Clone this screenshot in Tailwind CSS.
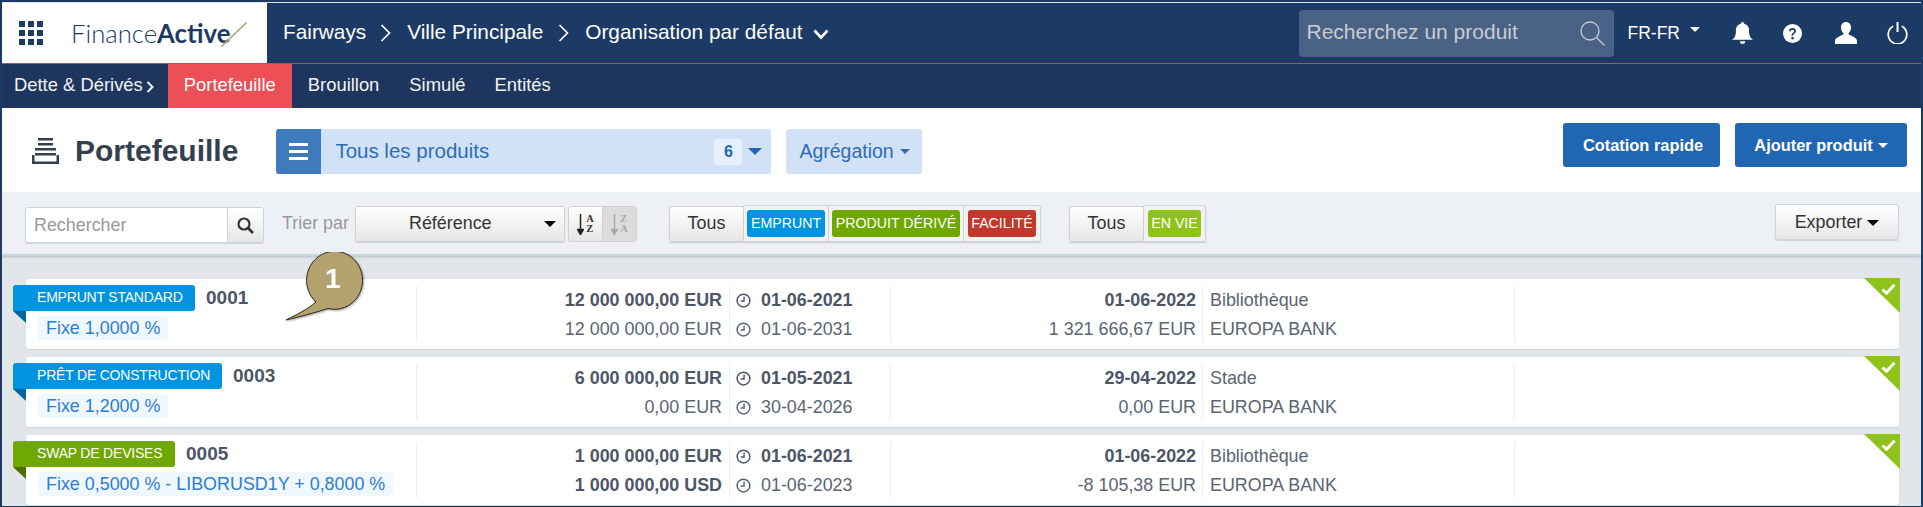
<!DOCTYPE html>
<html lang="fr">
<head>
  <meta charset="UTF-8">
  <title>Portefeuille</title>
  <script src="https://cdn.jsdelivr.net/npm/@tailwindcss/browser@4"></script>
</head>
<body class="bg-[#1c3a66]">
  <svg class="hidden">
    <symbol id="clock" viewBox="0 0 16 16"><circle cx="8" cy="8" r="6.8" fill="none" stroke="currentColor" stroke-width="1.6"/><path d="M8.600 3.800v4.800H5" fill="none" stroke="currentColor" stroke-width="1.500"/></symbol>
    <symbol id="check" viewBox="0 0 15 12"><path d="M1.500 6.500 5.500 10.300 13.500 1.800" fill="none" stroke="#fff" stroke-width="3"/></symbol>
  </svg>

  <div class="w-[1923px] h-[507px] overflow-hidden p-[2px] relative font-['Liberation_Sans',Arial,sans-serif]">
    <div class="h-px bg-[#dfe3e8]"></div>

    <!-- Top nav -->
    <div class="h-[60px] bg-[#1c3a66] flex items-center text-white">
      <div class="w-[265px] h-full bg-white flex items-center shrink-0">
        <div class="ml-[17px] grid grid-cols-3 gap-[3px] w-[24px]">
          <span class="w-[6px] h-[6px] bg-[#1c3a66]"></span><span class="w-[6px] h-[6px] bg-[#1c3a66]"></span><span class="w-[6px] h-[6px] bg-[#1c3a66]"></span>
          <span class="w-[6px] h-[6px] bg-[#1c3a66]"></span><span class="w-[6px] h-[6px] bg-[#1c3a66]"></span><span class="w-[6px] h-[6px] bg-[#1c3a66]"></span>
          <span class="w-[6px] h-[6px] bg-[#1c3a66]"></span><span class="w-[6px] h-[6px] bg-[#1c3a66]"></span><span class="w-[6px] h-[6px] bg-[#1c3a66]"></span>
        </div>
        <div class="ml-[28px] text-[25.7px] text-[#1c3a66] font-['Lato',sans-serif] font-light whitespace-nowrap">Finance<span class="font-bold">Active</span></div>
        <svg class="-ml-[9px] mt-[3px]" width="26" height="25" viewBox="0 0 26 25"><path d="M0.500 24.500 25.500 0.500" stroke="#b8a77a" stroke-width="1.600"/></svg>
      </div>
      <span class="ml-[16px] mb-[2px] text-[20.8px] whitespace-nowrap">Fairways</span>
      <svg class="ml-[14px]" width="11" height="18" viewBox="0 0 11 18"><path d="M1.500 1 9.500 9 1.500 17" fill="none" stroke="#fff" stroke-width="1.700"/></svg>
      <span class="ml-[16px] mb-[2px] text-[20.8px] whitespace-nowrap">Ville Principale</span>
      <svg class="ml-[15px]" width="11" height="18" viewBox="0 0 11 18"><path d="M1.500 1 9.500 9 1.500 17" fill="none" stroke="#fff" stroke-width="1.700"/></svg>
      <span class="ml-[16px] mb-[2px] text-[20.8px] whitespace-nowrap">Organisation par défaut</span>
      <svg class="ml-[10px] mt-[3px]" width="16" height="11" viewBox="0 0 16 11"><path d="M1.500 1.500 8 8.500 14.500 1.500" fill="none" stroke="#fff" stroke-width="2.600"/></svg>

      <div class="ml-auto w-[315px] h-[47px] bg-[#4a6285] rounded-[4px] flex items-center pl-[8px] pr-[9px]">
        <span class="mb-[2px] text-[21px] text-[#c9ccd0] whitespace-nowrap">Recherchez un produit</span>
        <svg class="ml-auto" width="25" height="25" viewBox="0 0 25 25"><circle cx="10" cy="10" r="9" fill="none" stroke="#c9ccd0" stroke-width="1.300"/><path d="M16.500 16.500 24.500 24.500" stroke="#c9ccd0" stroke-width="1.300"/></svg>
      </div>
      <span class="ml-[14px] text-[17.5px] whitespace-nowrap">FR-FR</span>
      <span class="ml-[10px] mb-[8px] w-0 h-0 border-x-[5px] border-x-transparent border-t-[5px] border-t-white"></span>
      <svg class="ml-[32px]" width="21" height="23" viewBox="0 0 20 22"><path d="M10 0a1.600 1.600 0 0 1 1.600 1.700C15 2.500 16.300 5 16.300 8.500c0 4.500 1.200 6.500 3.700 8.500H0c2.500-2 3.700-4 3.700-8.500C3.700 5 5 2.500 8.400 1.700A1.600 1.600 0 0 1 10 0ZM7.500 18.500h5a2.500 2.500 0 0 1-5 0Z" fill="#fff"/></svg>
      <svg class="ml-[30px]" width="19" height="19" viewBox="0 0 19 19"><circle cx="9.500" cy="9.500" r="9.500" fill="#fff"/><path d="M6 7.300C6 5.300 7.500 4.100 9.500 4.100s3.500 1.200 3.500 3c0 2.600-3 2.600-3 4.700H8.500c0-3 2.700-3.100 2.700-4.600 0-1-.8-1.500-1.700-1.500-1 0-1.700.6-1.800 1.600Z" fill="#1c3a66"/><rect x="8.400" y="13" width="2.300" height="2.300" fill="#1c3a66"/></svg>
      <svg class="ml-[33px]" width="22" height="22" viewBox="0 0 22 22"><path d="M11 0c3 0 5 2.300 5 5.500 0 2.200-.8 4.200-2.200 5.400-.4.400-.4 1.500.3 1.900 3 1.500 7.900 2.800 7.900 6.200V22H0v-3c0-3.400 4.900-4.700 7.900-6.200.7-.4.700-1.500.3-1.900C6.800 9.700 6 7.700 6 5.500 6 2.300 8 0 11 0Z" fill="#fff"/></svg>
      <svg class="ml-[30px] mr-[13px]" width="21" height="22" viewBox="0 0 21 22"><path d="M6.200 4.300a9.300 9.300 0 1 0 8.600 0" fill="none" stroke="#fff" stroke-width="1.700"/><path d="M10.500 0v10" stroke="#fff" stroke-width="2"/></svg>
    </div>
    <div class="h-px bg-[#b5525a]"></div>

    <!-- Sub nav -->
    <div class="h-[44px] bg-[#1e365e] flex items-center text-[#f2f4f7] text-[18.4px]">
      <span class="ml-[12px] mb-[2px] whitespace-nowrap">Dette &amp; Dérivés</span>
      <svg class="ml-[3px] mt-[1px]" width="8" height="12" viewBox="0 0 8 12"><path d="M1.500 1 6.500 6 1.500 11" fill="none" stroke="#f2f4f7" stroke-width="2"/></svg>
      <div class="ml-[14px] w-[124px] h-full pb-[2px] bg-[#ec4f55] text-white flex items-center justify-center whitespace-nowrap">Portefeuille</div>
      <span class="ml-[16px] mb-[2px] whitespace-nowrap">Brouillon</span>
      <span class="ml-[30px] mb-[2px] whitespace-nowrap">Simulé</span>
      <span class="ml-[29px] mb-[2px] whitespace-nowrap">Entités</span>
    </div>

    <!-- Title bar -->
    <div class="h-[84px] bg-white flex items-start">
      <svg class="ml-[30px] mt-[30px]" width="27" height="26" viewBox="0 0 27 26" fill="#343f50"><rect x="6" y="0" width="15" height="2.500"/><rect x="6" y="5" width="15" height="2.500"/><rect x="3" y="10" width="21" height="2.500"/><rect x="3" y="15" width="21" height="2.500"/><path d="M0 17h2.500v6.500h22V17H27v9H0Z"/></svg>
      <span class="ml-[16px] mt-[22px] text-[30px] leading-[42px] font-bold text-[#343f50] whitespace-nowrap">Portefeuille</span>
      <div class="ml-[38px] mt-[21px] w-[495px] h-[45px] bg-[#d1e2f7] rounded-[3px] flex items-center overflow-hidden">
        <div class="w-[45px] h-full bg-[#3f7abd] flex flex-col items-center justify-center gap-[4px]">
          <span class="w-[19px] h-[3px] bg-white"></span><span class="w-[19px] h-[3px] bg-white"></span><span class="w-[19px] h-[3px] bg-white"></span>
        </div>
        <span class="ml-[14px] text-[20.5px] text-[#2e6cb5] whitespace-nowrap">Tous les produits</span>
        <span class="ml-auto w-[28px] h-[26px] bg-[#e6f0fc] rounded-[3px] text-[#2166b3] text-[16px] font-bold flex items-center justify-center">6</span>
        <span class="ml-[6px] mr-[9px] w-0 h-0 border-x-[7px] border-x-transparent border-t-[7px] border-t-[#2166b3]"></span>
      </div>
      <div class="ml-[15px] mt-[21px] w-[136px] h-[45px] bg-[#d1e2f7] rounded-[3px] flex items-center pl-[13px]">
        <span class="text-[19.5px] text-[#2e6cb5] whitespace-nowrap">Agrégation</span>
        <span class="ml-[6px] w-0 h-0 border-x-[5px] border-x-transparent border-t-[5px] border-t-[#2e6cb5]"></span>
      </div>
      <div class="ml-auto mt-[15px] w-[157px] h-[44px] bg-[#2166b3] rounded-[3px] flex items-center justify-center pl-[3px] text-white text-[16.4px] font-bold whitespace-nowrap">Cotation rapide</div>
      <div class="ml-[15px] mr-[14px] mt-[15px] w-[172px] h-[44px] bg-[#2166b3] rounded-[3px] flex items-center justify-center gap-[5px] text-white text-[16.4px] font-bold whitespace-nowrap">Ajouter produit<span class="w-0 h-0 border-x-[5px] border-x-transparent border-t-[5px] border-t-white"></span></div>
    </div>

    <!-- Toolbar -->
    <div class="h-[64px] bg-[#edf0f5] flex items-start border-b-2 border-[#c8d5df] relative z-10 shadow-[0_1px_2px_rgba(90,110,130,0.35)] text-[17.9px]">
      <div class="ml-[23px] mt-[15px] flex h-[36px] w-[239px] border border-[#d0d3d6] rounded-[3px] bg-white overflow-hidden shadow-[0_1px_1px_rgba(0,0,0,0.12)]">
        <span class="w-[201px] pl-[8px] leading-[34px] text-[#999]">Rechercher</span>
        <div class="flex-1 border-l border-[#d0d3d6] bg-gradient-to-b from-white to-[#e6e6e6] flex items-center justify-center">
          <svg width="17" height="17" viewBox="0 0 17 17"><circle cx="7" cy="7" r="5.500" fill="none" stroke="#333" stroke-width="2.200"/><path d="M11 11 16 16" stroke="#333" stroke-width="2.600"/></svg>
        </div>
      </div>
      <span class="ml-[18px] mt-[13px] leading-[36px] text-[#999] whitespace-nowrap w-[67px]">Trier par</span>
      <div class="ml-[6px] mt-[14px] w-[210px] h-[36px] pb-[2px] border border-[#cfd2d5] rounded-[3px] bg-gradient-to-b from-white to-[#e6e6e6] flex items-center shadow-[0_1px_1px_rgba(0,0,0,0.12)]">
        <span class="ml-[53px] text-[#333]">Référence</span>
        <span class="ml-auto mr-[8px] mt-[2px] w-0 h-0 border-x-[6px] border-x-transparent border-t-[6px] border-t-black"></span>
      </div>
      <div class="ml-[3px] mt-[14px] w-[35px] h-[36px] border border-[#cfd2d5] rounded-l-[3px] bg-gradient-to-b from-white to-[#e6e6e6] flex items-center justify-center gap-[2px]">
        <svg width="7" height="21" viewBox="0 0 7 21"><path d="M3.500 0v19M0.500 15.500 3.500 20.500 6.500 15.500Z" fill="#222" stroke="#222" stroke-width="1.500"/></svg>
        <div class="flex flex-col text-[10.5px] leading-[10.5px] font-bold font-['Liberation_Serif',serif] text-[#333]"><span>A</span><span>Z</span></div>
      </div>
      <div class="w-[34px] mt-[14px] h-[36px] border border-l-0 border-[#cfd2d5] rounded-r-[3px] bg-[#dcdcdc] flex items-center justify-center gap-[2px]">
        <svg width="7" height="21" viewBox="0 0 7 21"><path d="M3.500 0v19M0.500 15.500 3.500 20.500 6.500 15.500Z" fill="#a8a8a8" stroke="#a8a8a8" stroke-width="1.500"/></svg>
        <div class="flex flex-col text-[10.5px] leading-[10.5px] font-bold font-['Liberation_Serif',serif] text-[#a8a8a8]"><span>Z</span><span>A</span></div>
      </div>

      <div class="ml-[32px] mt-[13px] flex h-[37px] shadow-[0_1px_1px_rgba(0,0,0,0.12)]">
        <div class="w-[75px] mt-px pb-[2px] border border-[#cfd2d5] rounded-l-[3px] bg-gradient-to-b from-white to-[#e6e6e6] flex items-center justify-center text-[#333]">Tous</div>
        <div class="w-[85px] border border-l-0 border-[#cfd2d5] bg-[#f2f2f2] flex items-center justify-center"><span class="w-[78px] h-[27px] rounded-[3px] bg-[#0093e0] text-white text-[14.2px] flex items-center justify-center">EMPRUNT</span></div>
        <div class="w-[135px] border border-l-0 border-[#cfd2d5] bg-[#f2f2f2] flex items-center justify-center"><span class="w-[128px] h-[27px] rounded-[3px] bg-[#6fa800] text-white text-[14.2px] flex items-center justify-center whitespace-nowrap">PRODUIT DÉRIVÉ</span></div>
        <div class="w-[77px] border border-l-0 border-[#cfd2d5] rounded-r-[3px] bg-[#f2f2f2] flex items-center justify-center"><span class="w-[68px] h-[27px] rounded-[3px] bg-[#c0392b] text-white text-[14.2px] flex items-center justify-center">FACILITÉ</span></div>
      </div>

      <div class="ml-[28px] mt-[13px] flex h-[37px] shadow-[0_1px_1px_rgba(0,0,0,0.12)]">
        <div class="w-[75px] mt-px pb-[2px] border border-[#cfd2d5] rounded-l-[3px] bg-gradient-to-b from-white to-[#e6e6e6] flex items-center justify-center text-[#333]">Tous</div>
        <div class="w-[62px] border border-l-0 border-[#cfd2d5] rounded-r-[3px] bg-[#f2f2f2] flex items-center justify-center"><span class="w-[53px] h-[27px] rounded-[3px] bg-[#8fc31a] text-white text-[14.2px] flex items-center justify-center whitespace-nowrap">EN VIE</span></div>
      </div>

      <div class="ml-auto mr-[22px] mt-[12px] w-[124px] h-[36px] border border-[#cfd2d5] rounded-[3px] bg-gradient-to-b from-white to-[#e6e6e6] flex items-center justify-center gap-[5px] text-[#333] shadow-[0_1px_1px_rgba(0,0,0,0.12)]">Exporter<span class="mt-[2px] w-0 h-0 border-x-[6px] border-x-transparent border-t-[6px] border-t-black"></span></div>
    </div>

    <!-- List -->
    <div class="h-[250px] bg-[#e2e6ea] pt-[23px] pl-[24px] pr-[22px] flex flex-col gap-[8px] overflow-hidden relative">

      <div class="relative shrink-0 h-[70px] bg-white rounded-[3px] shadow-[0_1px_1px_rgba(0,0,0,0.08)] py-[7px] flex text-[17.9px] text-[#5a6472]">
        <div class="w-[391px] border-r border-[#eceef0] relative">
          <div class="-ml-[13px] -mt-px h-[26px] flex items-center">
            <span class="w-[182px] h-[26px] pl-[24px] bg-[#0093e0] rounded-r-[3px] rounded-tl-[3px] text-white text-[14px] tracking-[-0.2px] leading-[25px] whitespace-nowrap">EMPRUNT STANDARD</span>
            <span class="ml-[11px] text-[19px] leading-[26px] font-bold text-[#4d5666]">0001</span>
          </div>
          <span class="absolute -left-[13px] top-[25px] w-0 h-0 border-l-[13px] border-l-transparent border-t-[12px] border-t-[#0065a3]"></span>
          <span class="block w-fit ml-[12px] mt-[5px] h-[24px] px-[8px] rounded-[4px] bg-[#eff7ff] text-[#2d7dd2] leading-[24px] whitespace-nowrap">Fixe 1,0000 %</span>
        </div>
        <div class="w-[313px] border-r border-[#eceef0] pr-[7px] text-right leading-[29px] whitespace-nowrap"><div class="font-bold text-[#4d5666]">12 000 000,00 EUR</div><div>12 000 000,00 EUR</div></div>
        <div class="w-[161px] border-r border-[#eceef0] pl-[6px] leading-[29px] whitespace-nowrap">
          <div class="flex items-center gap-[10px] font-bold text-[#4d5666]"><svg class="w-[15px] h-[15px]"><use href="#clock"/></svg>01-06-2021</div>
          <div class="flex items-center gap-[10px]"><svg class="w-[15px] h-[15px]"><use href="#clock"/></svg>01-06-2031</div>
        </div>
        <div class="w-[312px] border-r border-[#eceef0] pr-[6px] text-right leading-[29px] whitespace-nowrap"><div class="font-bold text-[#4d5666]">01-06-2022</div><div>1 321 666,67 EUR</div></div>
        <div class="w-[312px] border-r border-[#eceef0] pl-[7px] leading-[29px] whitespace-nowrap"><div>Bibliothèque</div><div>EUROPA BANK</div></div>
        <svg class="absolute -top-px -right-px" width="36" height="35" viewBox="0 0 36 35"><polygon points="0,0 36,0 36,35" fill="#8fc31a"/></svg>
        <svg class="absolute top-[4px] right-[3px] w-[15px] h-[12px]"><use href="#check"/></svg>
      </div>

      <div class="relative shrink-0 h-[70px] bg-white rounded-[3px] shadow-[0_1px_1px_rgba(0,0,0,0.08)] py-[7px] flex text-[17.9px] text-[#5a6472]">
        <div class="w-[391px] border-r border-[#eceef0] relative">
          <div class="-ml-[13px] -mt-px h-[26px] flex items-center">
            <span class="w-[209px] h-[26px] pl-[24px] bg-[#0093e0] rounded-r-[3px] rounded-tl-[3px] text-white text-[14px] tracking-[-0.2px] leading-[25px] whitespace-nowrap">PRÊT DE CONSTRUCTION</span>
            <span class="ml-[11px] text-[19px] leading-[26px] font-bold text-[#4d5666]">0003</span>
          </div>
          <span class="absolute -left-[13px] top-[25px] w-0 h-0 border-l-[13px] border-l-transparent border-t-[12px] border-t-[#0065a3]"></span>
          <span class="block w-fit ml-[12px] mt-[5px] h-[24px] px-[8px] rounded-[4px] bg-[#eff7ff] text-[#2d7dd2] leading-[24px] whitespace-nowrap">Fixe 1,2000 %</span>
        </div>
        <div class="w-[313px] border-r border-[#eceef0] pr-[7px] text-right leading-[29px] whitespace-nowrap"><div class="font-bold text-[#4d5666]">6 000 000,00 EUR</div><div>0,00 EUR</div></div>
        <div class="w-[161px] border-r border-[#eceef0] pl-[6px] leading-[29px] whitespace-nowrap">
          <div class="flex items-center gap-[10px] font-bold text-[#4d5666]"><svg class="w-[15px] h-[15px]"><use href="#clock"/></svg>01-05-2021</div>
          <div class="flex items-center gap-[10px]"><svg class="w-[15px] h-[15px]"><use href="#clock"/></svg>30-04-2026</div>
        </div>
        <div class="w-[312px] border-r border-[#eceef0] pr-[6px] text-right leading-[29px] whitespace-nowrap"><div class="font-bold text-[#4d5666]">29-04-2022</div><div>0,00 EUR</div></div>
        <div class="w-[312px] border-r border-[#eceef0] pl-[7px] leading-[29px] whitespace-nowrap"><div>Stade</div><div>EUROPA BANK</div></div>
        <svg class="absolute -top-px -right-px" width="36" height="35" viewBox="0 0 36 35"><polygon points="0,0 36,0 36,35" fill="#8fc31a"/></svg>
        <svg class="absolute top-[4px] right-[3px] w-[15px] h-[12px]"><use href="#check"/></svg>
      </div>

      <div class="relative shrink-0 h-[70px] bg-white rounded-[3px] shadow-[0_1px_1px_rgba(0,0,0,0.08)] py-[7px] flex text-[17.9px] text-[#5a6472]">
        <div class="w-[391px] border-r border-[#eceef0] relative">
          <div class="-ml-[13px] -mt-px h-[26px] flex items-center">
            <span class="w-[162px] h-[26px] pl-[24px] bg-[#6fa800] rounded-r-[3px] rounded-tl-[3px] text-white text-[14px] tracking-[-0.2px] leading-[25px] whitespace-nowrap">SWAP DE DEVISES</span>
            <span class="ml-[11px] text-[19px] leading-[26px] font-bold text-[#4d5666]">0005</span>
          </div>
          <span class="absolute -left-[13px] top-[25px] w-0 h-0 border-l-[13px] border-l-transparent border-t-[12px] border-t-[#4a7000]"></span>
          <span class="block w-fit ml-[12px] mt-[5px] h-[24px] px-[8px] rounded-[4px] bg-[#eff7ff] text-[#2d7dd2] leading-[24px] whitespace-nowrap">Fixe 0,5000 % - LIBORUSD1Y + 0,8000 %</span>
        </div>
        <div class="w-[313px] border-r border-[#eceef0] pr-[7px] text-right leading-[29px] font-bold text-[#4d5666] whitespace-nowrap"><div>1 000 000,00 EUR</div><div>1 000 000,00 USD</div></div>
        <div class="w-[161px] border-r border-[#eceef0] pl-[6px] leading-[29px] whitespace-nowrap">
          <div class="flex items-center gap-[10px] font-bold text-[#4d5666]"><svg class="w-[15px] h-[15px]"><use href="#clock"/></svg>01-06-2021</div>
          <div class="flex items-center gap-[10px]"><svg class="w-[15px] h-[15px]"><use href="#clock"/></svg>01-06-2023</div>
        </div>
        <div class="w-[312px] border-r border-[#eceef0] pr-[6px] text-right leading-[29px] whitespace-nowrap"><div class="font-bold text-[#4d5666]">01-06-2022</div><div>-8 105,38 EUR</div></div>
        <div class="w-[312px] border-r border-[#eceef0] pl-[7px] leading-[29px] whitespace-nowrap"><div>Bibliothèque</div><div>EUROPA BANK</div></div>
        <svg class="absolute -top-px -right-px" width="36" height="35" viewBox="0 0 36 35"><polygon points="0,0 36,0 36,35" fill="#8fc31a"/></svg>
        <svg class="absolute top-[4px] right-[3px] w-[15px] h-[12px]"><use href="#check"/></svg>
      </div>
    </div>

    <!-- Callout -->
    <div class="absolute left-[284px] top-[252px] w-[82px] h-[70px] z-20">
      <svg class="absolute inset-0" width="82" height="70" viewBox="0 0 82 70"><path d="M32 50A28 29 0 1 1 44 56.500C30 61 15 65 2 68 12 63 24 57 32 50Z" fill="#b3a26d" stroke="#2a2a20" stroke-width="1" style="filter:drop-shadow(1px 1px 1px rgba(0,0,0,.35))"/></svg>
      <span class="absolute left-[41px] top-[10px] text-[28px] font-bold text-white leading-[34px]">1</span>
    </div>
  </div>
</body>
</html>
